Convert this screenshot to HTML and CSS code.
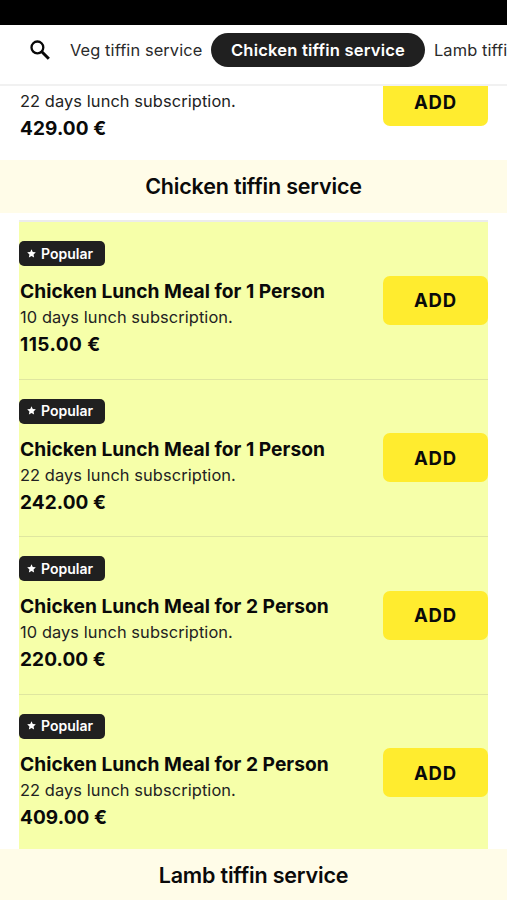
FILE: index.html
```html
<!DOCTYPE html>
<html lang="en">
<head>
<meta charset="utf-8">
<title>Tiffin menu</title>
<link rel="stylesheet" href="styles.css">
</head>
<body>
<div class="status"></div>
<nav class="nav">
  <svg class="search" viewBox="0 0 20 20"><circle cx="7.4" cy="7.4" r="5.9" fill="none" stroke="#080808" stroke-width="2.3"/><path d="M11.8 11.8L18.8 18.8" stroke="#080808" stroke-width="3"/></svg>
  <a class="tab veg">Veg tiffin service</a>
  <a class="tab active"><span>Chicken tiffin service</span></a>
  <a class="tab">Lamb tiffin service</a>
</nav>
<main>
  <article class="item partial">
    <div class="info"><p class="desc">22 days lunch subscription.</p><p class="price">429.00 €</p></div>
    <button class="add">ADD</button>
  </article>
  <h2 class="heading"><span>Chicken tiffin service</span></h2>
  <section class="list">
    <article class="item">
      <div class="info"><div class="badge"><svg viewBox="0 0 10 10"><path d="M5 .3L6.4 3.3L9.8 3.7L7.3 6.1L7.9 9.4L5 7.8L2.1 9.4L2.7 6.1L.2 3.7L3.6 3.3Z" fill="#fff"/></svg><span>Popular</span></div>
      <h3>Chicken Lunch Meal for 1 Person</h3><p class="desc">10 days lunch subscription.</p><p class="price wide">115.00 €</p></div>
      <button class="add">ADD</button>
    </article>
    <article class="item">
      <div class="info"><div class="badge"><svg viewBox="0 0 10 10"><path d="M5 .3L6.4 3.3L9.8 3.7L7.3 6.1L7.9 9.4L5 7.8L2.1 9.4L2.7 6.1L.2 3.7L3.6 3.3Z" fill="#fff"/></svg><span>Popular</span></div>
      <h3>Chicken Lunch Meal for 1 Person</h3><p class="desc">22 days lunch subscription.</p><p class="price">242.00 €</p></div>
      <button class="add">ADD</button>
    </article>
    <article class="item">
      <div class="info"><div class="badge"><svg viewBox="0 0 10 10"><path d="M5 .3L6.4 3.3L9.8 3.7L7.3 6.1L7.9 9.4L5 7.8L2.1 9.4L2.7 6.1L.2 3.7L3.6 3.3Z" fill="#fff"/></svg><span>Popular</span></div>
      <h3>Chicken Lunch Meal for 2 Person</h3><p class="desc">10 days lunch subscription.</p><p class="price">220.00 €</p></div>
      <button class="add">ADD</button>
    </article>
    <article class="item">
      <div class="info"><div class="badge"><svg viewBox="0 0 10 10"><path d="M5 .3L6.4 3.3L9.8 3.7L7.3 6.1L7.9 9.4L5 7.8L2.1 9.4L2.7 6.1L.2 3.7L3.6 3.3Z" fill="#fff"/></svg><span>Popular</span></div>
      <h3>Chicken Lunch Meal for 2 Person</h3><p class="desc">22 days lunch subscription.</p><p class="price">409.00 €</p></div>
      <button class="add">ADD</button>
    </article>
  </section>
  <h2 class="heading lamb"><span>Lamb tiffin service</span></h2>
</main>
</body>
</html>
```
FILE: styles.css
```css
* { box-sizing: border-box; margin: 0; padding: 0; }
body {
  width: 507px;
  height: 900px;
  overflow: hidden;
  background: #fff;
  color: #0a0a0a;
  font-family: Inter, "Liberation Sans", sans-serif;
}
.status { height: 25px; background: #000; }
.nav {
  display: flex;
  align-items: flex-start;
  height: 61px;
  padding: 8px 0 0 30px;
  border-bottom: 2px solid #f1f1f1;
  overflow: hidden;
}
.search { flex: none; width: 20px; height: 20px; margin: 7px 20px 0 0; }
.tab {
  flex: none;
  height: 34px;
  color: #2a2a2a;
  font-size: 16.4px;
  line-height: 34px;
  letter-spacing: 0.1px;
  white-space: nowrap;
}
.veg { width: 141px; }
.active {
  width: 214px;
  margin-right: 9px;
  border-radius: 17px;
  background: #202020;
  color: #fff;
  font-size: 16.6px;
  font-weight: 600;
  letter-spacing: 0.18px;
  text-align: center;
}
.item {
  display: flex;
  align-items: flex-start;
  justify-content: space-between;
  height: 157.6px;
  border-bottom: 1px solid #dfe6a0;
}
.item:last-child { height: 154.2px; border-bottom: 0; }
.list {
  margin: 7px 19px 0;
  border-top: 2px solid #ececec;
  background: #f6ffa9;
}
.info { padding-top: 19px; }
.badge {
  display: flex;
  align-items: center;
  width: 86px;
  height: 25px;
  margin-bottom: 11px;
  padding: 0 0 1px 8px;
  border-radius: 5px;
  background: #202020;
  color: #fff;
  font-size: 14px;
  font-weight: 600;
}
.badge svg { width: 9px; height: 9px; margin-right: 5px; }
h3, .desc, .price { padding-left: 1px; white-space: nowrap; }
h3 { font-size: 19.2px; line-height: 28px; font-weight: 700; letter-spacing: 0.02px; }
.desc { color: #222; font-size: 16.4px; line-height: 25px; letter-spacing: 0.09px; }
.price { font-size: 19px; line-height: 29px; font-weight: 700; letter-spacing: 0.1px; }
.wide { letter-spacing: 0.45px; }
.add {
  flex: none;
  width: 105px;
  height: 49px;
  margin-top: 53.6px;
  border: 0;
  border-radius: 7px;
  background: #ffec2f;
  color: #0a0a0a;
  font: 700 18.5px Inter, "Liberation Sans", sans-serif;
  letter-spacing: 0.9px;
}
.partial {
  height: 74px;
  margin: 0 19px;
  border: 0;
}
.partial .info { padding-top: 3px; }
.partial .add { height: 40px; margin-top: 0; padding-bottom: 9px; border-radius: 0 0 7px 7px; }
.heading {
  height: 53px;
  background: #fffce8;
  font-size: 21.5px;
  font-weight: 600;
  line-height: 53px;
  letter-spacing: -0.17px;
  text-align: center;
}
.lamb { height: 60px; }
```
